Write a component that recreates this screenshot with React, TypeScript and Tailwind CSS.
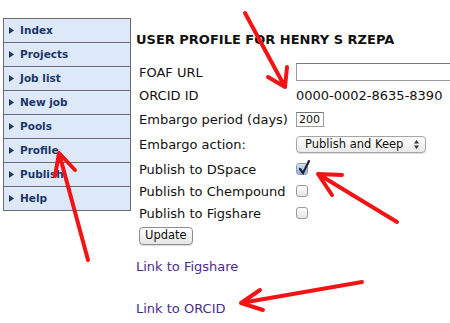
import React from "react";

const menu = ["Index", "Projects", "Job list", "New job", "Pools", "Profile", "Publish", "Help"];

function Check({ on }: { on?: boolean }) {
  return (
    <span className="relative inline-block w-[12px] h-[12px] rounded-[3px] border border-[#9a9a9a] bg-gradient-to-b from-[#ffffff] to-[#e4e4e4]">
      {on && (
        <>
          <span className="absolute inset-0 rounded-[2px] bg-gradient-to-b from-[#cfe0f6] to-[#8fb3e0]" />
          <svg className="absolute left-[1px] top-[-4px]" width="12" height="15" viewBox="0 0 12 15">
            <path d="M2 9 L5 13 L11 1" fill="none" stroke="#1b2536" strokeWidth="2.2" strokeLinecap="round" />
          </svg>
        </>
      )}
    </span>
  );
}

function Row({ h, label, children }: { h: string; label: string; children?: React.ReactNode }) {
  return (
    <div className={`flex items-center ${h}`}>
      <span className="w-[157px] shrink-0">{label}</span>
      <div className="flex items-center">{children}</div>
    </div>
  );
}

export default function App() {
  return (
    <div className="relative w-[450px] h-[323px] overflow-hidden bg-white text-[#111] font-['DejaVu_Sans',sans-serif]">
      <div className="flex">
        {/* Sidebar */}
        <div className="ml-[3px] mt-[18px] w-[128px] shrink-0 self-start border border-[#6b6b6b] border-b-0">
          {menu.map((m) => (
            <div key={m} className="flex items-center h-[24px] border-b border-[#6b6b6b] bg-[#dde9f9] pl-[5px] gap-[6px] text-[10.5px] font-bold text-[#1c3768]">
              <svg width="5" height="7" viewBox="0 0 5 7"><polygon points="0,0 5,3.5 0,7" fill="#1c3768" /></svg>
              <span>{m}</span>
            </div>
          ))}
        </div>

        {/* Main */}
        <div className="pl-[5px] pt-[33px] text-[13px] leading-none">
          <h1 className="text-[13px] font-bold h-[17px]">USER PROFILE FOR HENRY S RZEPA</h1>
          <div className="mt-[10px] pl-[3px]">
            <Row h="h-[24px]" label="FOAF URL">
              <span className="block w-[170px] h-[18px] border border-[#9c9c9c] border-t-[#777] bg-white" />
            </Row>
            <Row h="h-[23px]" label="ORCID ID">
              <span>0000-0002-8635-8390</span>
            </Row>
            <Row h="h-[24px]" label="Embargo period (days)">
              <span className="flex items-center w-[28px] h-[15px] border border-[#9c9c9c] border-t-[#777] pl-[2px] text-[11px]">200</span>
            </Row>
            <Row h="h-[27px]" label="Embargo action:">
              <span className="flex items-center justify-between w-[130px] h-[17px] rounded-[4px] border border-[#a5a5a5] bg-gradient-to-b from-[#ffffff] to-[#e9e9e9] pl-[8px] pr-[6px] text-[11.5px] shadow-[0_1px_1px_rgba(0,0,0,0.15)]">
                <span>Publish and Keep</span>
                <svg width="5" height="9" viewBox="0 0 5 9">
                  <polygon points="0,3.5 2.5,0 5,3.5" fill="#333" />
                  <polygon points="0,5.5 2.5,9 5,5.5" fill="#333" />
                </svg>
              </span>
            </Row>
            <Row h="h-[22px]" label="Publish to DSpace">
              <Check on />
            </Row>
            <Row h="h-[22px]" label="Publish to Chempound">
              <Check />
            </Row>
            <Row h="h-[22px]" label="Publish to Figshare">
              <Check />
            </Row>
            <div className="flex items-center h-[24px]">
              <button className="flex items-center h-[18px] px-[5px] rounded-[4px] border border-[#8c8c8c] bg-gradient-to-b from-[#ffffff] to-[#e6e6e6] text-[11.5px] shadow-[0_1px_1px_rgba(0,0,0,0.15)]">
                Update
              </button>
            </div>
          </div>
          <div className="mt-[12px] h-[13px] text-[#4b2c86]">Link to Figshare</div>
          <div className="mt-[29px] h-[13px] text-[#4b2c86]">Link to ORCID</div>
        </div>
      </div>

      {/* Annotation arrows */}
      <svg className="absolute inset-0 pointer-events-none" width="450" height="323" viewBox="0 0 450 323">
        <g fill="none" stroke="#f21414" strokeWidth="4" strokeLinecap="round" strokeLinejoin="round">
          <path d="M245 13 L285 87 M268 77 L285 87 L287 67" />
          <path d="M397 222 L318 174 M342 175 L318 174 L332 195" />
          <path d="M88 260 L59 153 M75 170 L59 153 L55 176" />
          <path d="M362 282 L241 303 M260 290 L241 303 L263 310" />
        </g>
      </svg>
    </div>
  );
}
